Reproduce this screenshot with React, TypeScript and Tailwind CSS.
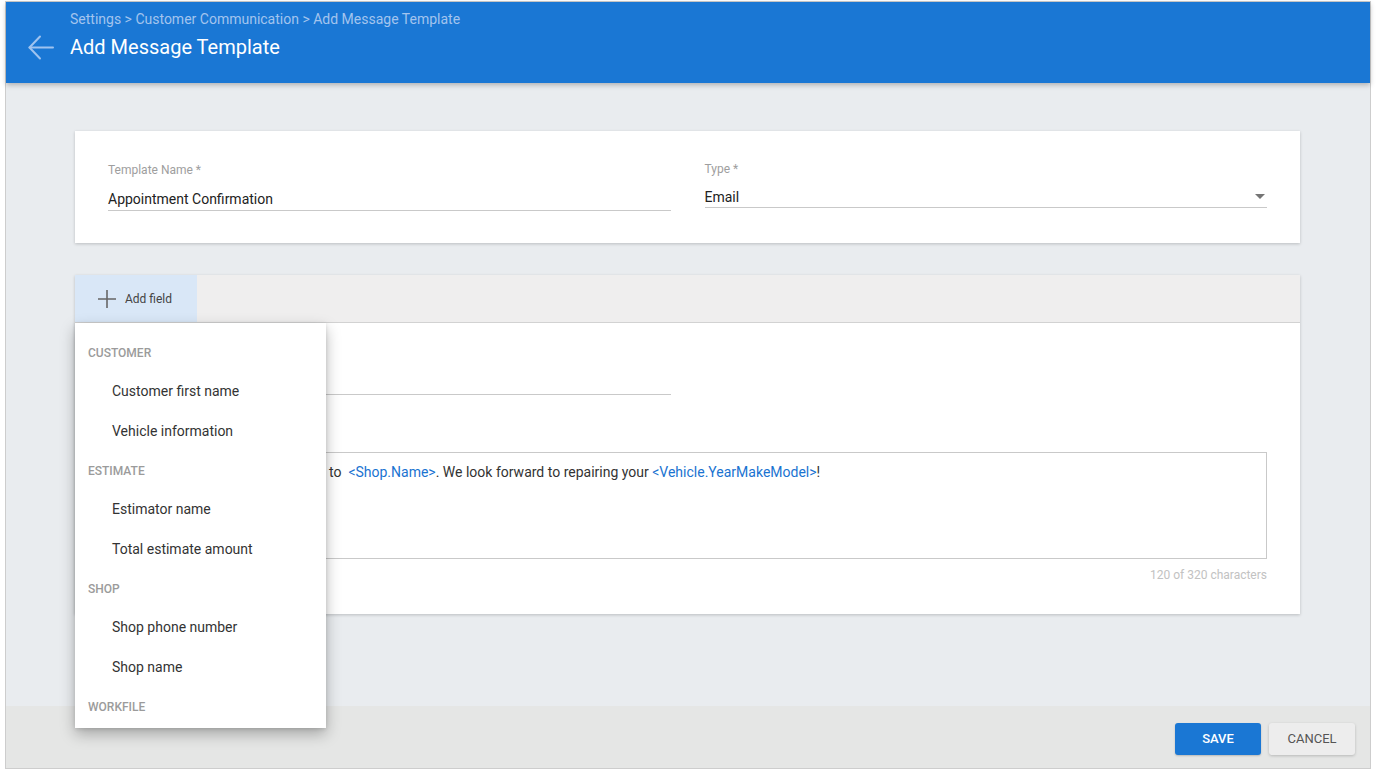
import React from 'react';

const font = { fontFamily: 'Roboto, "Liberation Sans", sans-serif' };

type MenuRow = { label: string; header?: boolean };

const menuRows: MenuRow[] = [
  { label: 'Customer', header: true },
  { label: 'Customer first name' },
  { label: 'Vehicle information' },
  { label: 'Estimate', header: true },
  { label: 'Estimator name' },
  { label: 'Total estimate amount' },
  { label: 'Shop', header: true },
  { label: 'Shop phone number' },
  { label: 'Shop name' },
  { label: 'Workfile', header: true },
];

const FieldMenu: React.FC = () => (
  <div className="absolute left-0 top-[48px] z-20 w-[251px] bg-white pt-[10px] pb-[2px] shadow-[0_6px_14px_rgba(0,0,0,0.28),0_1px_4px_rgba(0,0,0,0.12)]">
    {menuRows.map((row) =>
      row.header ? (
        <div key={row.label} className="flex h-[39.33px] items-center pl-[13px] text-[12px] font-medium uppercase text-[#9b9b9b]">
          {row.label}
        </div>
      ) : (
        <div key={row.label} className="flex h-[39.33px] items-center pl-[37px] text-[14px] text-[#333]">
          {row.label}
        </div>
      )
    )}
  </div>
);

export default function App() {
  return (
    <div className="min-h-screen bg-white pl-[5px] pt-[1px]" style={font}>
      <div className="flex h-[768px] w-[1366px] flex-col border border-[#cdcdcd] bg-[#e9ecef]">
        {/* Header */}
        <div className="relative z-10 flex h-[81px] shrink-0 bg-[#1a77d4] shadow-[0_2px_5px_rgba(0,0,0,0.25)]">
          <div className="flex w-[64px] items-start justify-center pt-[32px] pl-[6px]">
            <svg width="28" height="28" viewBox="0 0 28 28" fill="none" stroke="#9fc3ef" strokeWidth="2" strokeLinecap="round" strokeLinejoin="round">
              <path d="M26 13.5H2.5" />
              <path d="M13 2.5L2.5 13.5L13 24.5" />
            </svg>
          </div>
          <div className="flex flex-col pt-[7px]">
            <div className="text-[14px] leading-[20px] text-[#a3c4ee]">
              Settings &gt; Customer Communication &gt; Add Message Template
            </div>
            <div className="mt-[4px] text-[20px] leading-[28px] text-white">Add Message Template</div>
          </div>
        </div>

        {/* Body */}
        <div className="flex flex-1 flex-col pl-[69px] pr-[70px] pt-[48px]">
          <div className="flex h-[112px] gap-[34px] bg-white px-[33px] shadow-[0_1px_3px_rgba(0,0,0,0.2)]">
            <div className="flex flex-1 flex-col pt-[31px]">
              <div className="text-[12px] leading-[16px] text-[#9e9e9e]">Template Name *</div>
              <div className="mt-[11px] border-b border-[#c9c9c9] pb-px text-[14px] leading-[20px] text-[#222]">
                Appointment Confirmation
              </div>
            </div>
            <div className="flex flex-1 flex-col pt-[30px]">
              <div className="text-[12px] leading-[16px] text-[#9e9e9e]">Type *</div>
              <div className="mt-[10px] flex items-center justify-between border-b border-[#c9c9c9] text-[14px] leading-[20px] text-[#222]">
                <span>Email</span>
                <svg width="10" height="6" viewBox="0 0 10 6" className="mr-[2px]">
                  <path d="M0 0H10L5 5Z" fill="#757575" />
                </svg>
              </div>
            </div>
          </div>

          <div className="relative mt-[32px] bg-white shadow-[0_1px_3px_rgba(0,0,0,0.2)]">
            <div className="flex h-[48px] border-b border-[#d2d2d2] bg-[#efeeee]">
              <div className="flex w-[122px] items-center gap-[9px] bg-[#d9e7f7] pl-[23px]">
                <svg width="18" height="18" viewBox="0 0 18 18" stroke="#666" strokeWidth="1.6">
                  <path d="M9 0V18M0 9H18" />
                </svg>
                <span className="text-[12px] text-[#444]">Add field</span>
              </div>
            </div>
            <FieldMenu />
            <div className="px-[33px]">
              <div className="flex gap-[34px]">
                <div className="h-[72px] flex-1 border-b border-[#c9c9c9]" />
                <div className="flex-1" />
              </div>
              <div className="mt-[57px] h-[107px] border border-[#c9c9c9] pl-[220px] pr-[13px] pt-[9px] text-[14px] leading-[20px] text-[#333]">
                to&nbsp; <span className="text-[#1a73d1]">&lt;Shop.Name&gt;</span>. We look forward to repairing your{' '}
                <span className="text-[#1a73d1]">&lt;Vehicle.YearMakeModel&gt;</span>!
              </div>
              <div className="mt-[8px] pb-[31px] text-right text-[12px] leading-[16px] text-[#c2c2c2]">120 of 320 characters</div>
            </div>
          </div>
        </div>

        {/* Footer */}
        <div className="flex h-[62px] shrink-0 justify-end gap-[8px] bg-[#e5e6e5] pr-[15px] pt-[17px]">
          <button className="h-[32px] w-[86px] rounded-[3px] bg-[#1a77d4] text-[13px] font-medium text-white shadow-[0_1px_2px_rgba(0,0,0,0.2)]">
            SAVE
          </button>
          <button className="h-[32px] w-[86px] rounded-[3px] bg-[#ededed] text-[13px] text-[#555] shadow-[0_1px_3px_rgba(0,0,0,0.2)]">
            CANCEL
          </button>
        </div>
      </div>
    </div>
  );
}
